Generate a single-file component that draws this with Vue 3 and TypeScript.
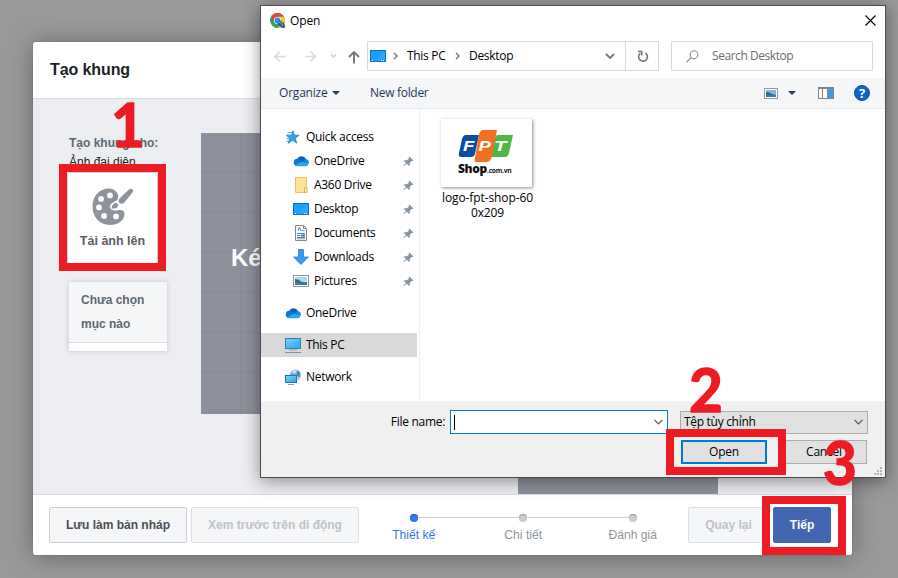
<script setup lang="ts">
type IconName = 'star' | 'cloud' | 'folder' | 'desktop' | 'doc' | 'down' | 'picture' | 'pc' | 'network'
interface NavItem { label: string; icon: IconName; pinned?: boolean; nested?: boolean; selected?: boolean }

const groups: NavItem[][] = [
  [
    { label: 'Quick access', icon: 'star' },
    { label: 'OneDrive', icon: 'cloud', nested: true, pinned: true },
    { label: 'A360 Drive', icon: 'folder', nested: true, pinned: true },
    { label: 'Desktop', icon: 'desktop', nested: true, pinned: true },
    { label: 'Documents', icon: 'doc', nested: true, pinned: true },
    { label: 'Downloads', icon: 'down', nested: true, pinned: true },
    { label: 'Pictures', icon: 'picture', nested: true, pinned: true },
  ],
  [{ label: 'OneDrive', icon: 'cloud' }],
  [{ label: 'This PC', icon: 'pc', selected: true }],
  [{ label: 'Network', icon: 'network' }],
]

const steps: { label: string; active?: boolean }[] = [
  { label: 'Thiết kế', active: true },
  { label: 'Chi tiết' },
  { label: 'Đánh giá' },
]
</script>

<template>
  <div class="screen">
    <section class="modal">
      <header class="modal-head">Tạo khung</header>
      <div class="modal-body">
        <aside class="side">
          <div class="side-title">Tạo khung cho:</div>
          <div class="side-value">Ảnh đại diện</div>
          <div class="upload">
            <svg width="42" height="38" viewBox="0 0 42 38">
              <path fill="#8d949e" fill-rule="evenodd" d="M17 .5C7 .5.5 8.500.5 18.500S7 37 18 37C27 37 32.500 31.500 32.500 26C32.500 22.500 30 21.500 27 22C22.500 23 18.500 23 18 18.500C18 15 23 14 25.500 11.500C28 6.500 23.500.5 17 .5ZM18 4.500a2.900 2.900 0 1 1 0 5.800a2.900 2.900 0 0 1 0-5.800ZM9 8a2.900 2.900 0 1 1 0 5.800a2.900 2.900 0 0 1 0-5.800ZM7 16.500a2.900 2.900 0 1 1 0 5.800a2.900 2.900 0 0 1 0-5.800ZM12 25a2.900 2.900 0 1 1 0 5.800a2.900 2.900 0 0 1 0-5.800ZM24 25.500a2.900 2.900 0 1 1 0 5.800a2.900 2.900 0 0 1 0-5.800Z" />
              <path fill="#8d949e" d="M27 11L37.500.9Q41 0 41.200 3.500L32 15Q28 17 26.500 13.500ZM19.500 20.500C20 16 23 14 25.500 15.500C27 19 25 21 19.500 20.500Z" />
            </svg>
            <span>Tải ảnh lên</span>
          </div>
          <div class="empty"><div class="empty-text">Chưa chọn<br />mục nào</div></div>
        </aside>
        <div class="canvas"><span>Ké</span></div>
        <div class="preview"></div>
        <div class="scrollbar"><i></i></div>
      </div>
      <footer class="modal-foot">
        <button class="btn draft">Lưu làm bản nháp</button>
        <button class="btn mobile off">Xem trước trên di động</button>
        <ol class="steps">
          <li v-for="s in steps" :key="s.label" :class="{ active: s.active }"><i></i><span>{{ s.label }}</span></li>
        </ol>
        <button class="btn back off">Quay lại</button>
        <button class="btn next">Tiếp</button>
      </footer>
    </section>

    <section class="dialog">
      <header class="title">
        <svg class="chrome" width="16" height="16" viewBox="0 0 16 16">
          <circle cx="7.500" cy="7.500" r="7.500" fill="#2fa45a" />
          <path d="M1 3.700A7.500 7.500 0 0 1 14 3.800H7.500L4 8.500Z" fill="#dd4b3e" />
          <path d="M14 3.800A7.500 7.500 0 0 1 8 15L11 8.500L8 3.800Z" fill="#fcc934" />
          <circle cx="7.500" cy="7.500" r="3.600" fill="#fff" />
          <circle cx="7.500" cy="7.500" r="2.900" fill="#4285f4" />
          <path d="M7 9l4-1.500 3 2.500 1.500 4.500-3.500.5-3-2.500Z" fill="#385a68" />
          <path d="M8 9l3 1 2 3M11 8l2 2" stroke="#69b8dc" fill="none" />
        </svg>
        <span class="title-text">Open</span>
        <svg class="close" width="11" height="11" viewBox="0 0 11 11"><path d="M.5.5l10 10M10.500.5l-10 10" stroke="#000" stroke-width="1.150" /></svg>
      </header>

      <div class="address-row">
        <svg class="nav-arrows" width="94" height="30" viewBox="0 0 94 30" fill="none">
          <path d="M9 10.500l-5 5 5 5M4 15.500h11" stroke="#dadada" stroke-width="1.600" />
          <path d="M39.500 10.500l5 5-5 5M44.500 15.500H34" stroke="#dadada" stroke-width="1.600" />
          <path d="M60 13.500l2.500 2.500 2.500-2.500" stroke="#d0d0d0" stroke-width="1.300" />
          <path d="M78 16l5-5 5 5M83 11v11.500" stroke="#777" stroke-width="1.900" />
        </svg>
        <div class="path">
          <svg width="16" height="12" viewBox="0 0 16 12"><use href="#i-desktop" y="-2" /></svg>
          <svg class="sep" width="5" height="8" viewBox="0 0 5 8"><path d="M1 1l3 3-3 3" fill="none" stroke="#777" stroke-width="1.400" /></svg>
          <span class="crumb1">This PC</span>
          <svg class="sep sep2" width="5" height="8" viewBox="0 0 5 8"><path d="M1 1l3 3-3 3" fill="none" stroke="#777" stroke-width="1.400" /></svg>
          <span class="crumb2">Desktop</span>
          <svg class="drop" width="10" height="7" viewBox="0 0 10 7"><path d="M1 1l4 4 4-4" fill="none" stroke="#777" stroke-width="1.900" /></svg>
          <div class="refresh">
            <svg width="12" height="13" viewBox="0 0 12 13" fill="none" stroke="#777" stroke-width="1.600"><path d="M8.300 3A4.400 4.400 0 1 1 3.200 3.400M1 1.500h3.700v4" /></svg>
          </div>
        </div>
        <div class="search">
          <svg width="13" height="13" viewBox="0 0 13 13" fill="none" stroke="#8a8a94" stroke-width="1.100"><circle cx="8" cy="4.700" r="3.900" /><path d="M5.200 7.500L.6 12.200" /></svg>
          <span>Search Desktop</span>
        </div>
      </div>

      <div class="toolbar">
        <span class="organize">Organize</span><i class="tri"></i>
        <span class="newf">New folder</span>
        <svg class="view" width="14" height="11" viewBox="0 0 14 11"><rect x=".5" y=".5" width="13" height="10" fill="#fff" stroke="#999" /><path d="M2 2h10v4H2Z" fill="#77b7e8" /><path d="M2 4q4 0 6 2l4 .5V9H2Z" fill="#3d6a6c" /><path d="M2 7h10v2H2Z" fill="#2f80b9" /></svg>
        <i class="tri tri2"></i>
        <svg class="pane" width="16" height="12" viewBox="0 0 16 12"><rect x=".5" y=".5" width="15" height="11" fill="#fff" stroke="#858585" /><path d="M0 0h16v2H0ZM4 2h1v10H4ZM9 2h1v10H9Z" fill="#858585" /><path d="M10 2h5v9h-5Z" fill="#4399e0" /></svg>
        <span class="help">?</span>
      </div>

      <div class="content">
        <nav>
          <div v-for="(g, gi) in groups" :key="gi" class="group">
            <div v-for="item in g" :key="item.label" class="item" :class="{ nested: item.nested, selected: item.selected }">
              <svg class="ico" width="16" height="16" viewBox="0 0 16 16"><use :href="'#i-' + item.icon" /></svg>
              <span>{{ item.label }}</span>
              <svg v-if="item.pinned" class="pin" width="11" height="11" viewBox="0 0 11 11"><path d="M6.500.5l4 4-1 .7-.8-.3-2 2 .2 2-1 1L3.700 7.700.8 10.300H.3V9.800L3 7 1 5l1-1 2 .2 2-2-.3-1Z" fill="#8796a3" /></svg>
            </div>
          </div>
        </nav>
        <div class="files">
          <figure class="file">
            <div class="thumb">
              <svg width="91" height="68" viewBox="0 0 91 68">
                <path d="M25 16h13l-4 19q-1 3-4 3H20q-3 0-2-4l3-14q1-4 4-4Z" fill="#0c4da2" />
                <path d="M57 16h15l-4 18q-1 4-4 4H50q-2 0-1-3l4-15q1-4 4-4Z" fill="#4fb748" />
                <path d="M42 11h14l-5 26q-1 6-6 6H35q-2 0-1-4l4-23q1-5 4-5Z" fill="#f37021" />
                <g font-family="Liberation Sans, sans-serif" font-weight="700" font-style="italic" font-size="14" fill="#fff">
                  <text x="22" y="32" textLength="11" lengthAdjust="spacingAndGlyphs">F</text><text x="37.500" y="32" textLength="12" lengthAdjust="spacingAndGlyphs">P</text><text x="53" y="32" textLength="12" lengthAdjust="spacingAndGlyphs">T</text>
                </g>
                <text x="17" y="53.500" font-family="Open Sans, sans-serif" font-weight="800" font-size="11.500" fill="#111" textLength="29" lengthAdjust="spacingAndGlyphs">Shop</text>
                <text x="46" y="53.500" font-family="Open Sans, sans-serif" font-weight="700" font-size="7" fill="#222" textLength="24.500" lengthAdjust="spacingAndGlyphs">.com.vn</text>
              </svg>
            </div>
            <figcaption>logo-fpt-shop-60<br />0x209</figcaption>
          </figure>
        </div>
      </div>

      <footer class="actions">
        <div class="line">
          <label>File name:</label>
          <div class="input"><i class="caret"></i><svg width="9" height="6" viewBox="0 0 9 6"><path d="M.5.8l4 4 4-4" fill="none" stroke="#555" stroke-width="1.200" /></svg></div>
          <div class="select"><span>Tệp tùy chỉnh</span><svg width="9" height="6" viewBox="0 0 9 6"><path d="M.5.8l4 4 4-4" fill="none" stroke="#555" stroke-width="1.200" /></svg></div>
        </div>
        <div class="line second">
          <button class="win primary">Open</button>
          <button class="win">Cancel</button>
        </div>
        <svg class="grip" width="8" height="8" viewBox="0 0 8 8" fill="#b4b4b4"><path d="M6 0h2v2H6ZM3 3h2v2H3ZM6 3h2v2H6ZM0 6h2v2H0ZM3 6h2v2H3ZM6 6h2v2H6Z" /></svg>
      </footer>
    </section>

    <div class="box b1"></div>
    <div class="box b2"></div>
    <div class="box b3"></div>
    <span class="num n1">1</span>
    <span class="num n2">2</span>
    <span class="num n3">3</span>

    <svg width="0" height="0" class="defs">
      <defs>
        <linearGradient id="g-blue" x1="0" y1="0" x2="1" y2="1"><stop offset="0" stop-color="#7fd0ff" /><stop offset="1" stop-color="#2ba3f3" /></linearGradient>
        <g id="i-desktop"><rect x=".5" y="2.500" width="15" height="11" fill="#1aa0fb" stroke="#0a72c6" /><path d="M15 3v8L5 13Z" fill="#3cb0ff" opacity=".5" /><path d="M2 12h1v1H2ZM11 12h1v1h-1ZM13 12h1v1h-1Z" fill="#fff" /></g>
        <g id="i-star"><path d="M9.500 1l1.400 4.400h4.800l-3.900 3 1.400 4.900-4.200-2.900-4.200 3.100 1.600-5L3 5.600h4.800Z" transform="translate(-1.500 .8)" fill="#2ea3ee" stroke="#1879bd" stroke-width=".7" /><path d="M2.500 3.500h5M1.500 6h4M1.500 9.500h4M1.500 12h3" stroke="#42a8e6" stroke-width=".9" /></g>
        <g id="i-cloud"><path d="M4 6.200A5 5 0 0 1 13 6L15 9 8 11Z" fill="#0b5fb5" /><path d="M4 5.800A3.700 3.700 0 0 0 3.300 13L11 9Q7 5 4 5.800Z" fill="#1074cd" /><path d="M12.800 6A3.500 3.500 0 0 1 15.600 10.800L10 8.800Q11 6 12.800 6Z" fill="#1487da" /><path d="M2 12.500Q5 9.500 10 8.700L15.700 10.800Q15 13.200 13 13.200H4Q3 13.200 2 12.500Z" fill="#27a5ec" /></g>
        <g id="i-folder"><path d="M2.500.5h11v15h-11Z" fill="#ffe394" stroke="#e8c262" /><path d="M11.500 10.500h2.500v5h-2.500Z" fill="#ffe9a8" stroke="#dab354" /></g>
        <g id="i-doc"><path d="M2.500.5h8l3 3v12h-11Z" fill="#fff" stroke="#868686" /><path d="M10.500.5v3h3" fill="none" stroke="#868686" /><path d="M5 6l1.300-4L8 6M4 8.500h8M4 10.500h3M4 12.500h8" stroke="#3d8cc5" fill="none" /><path d="M8 9.500h4v2H8Z" fill="#2b749f" /><path d="M8.500 5.500H12M4 13.800h8" stroke="#999" /></g>
        <path id="i-down" d="M5.500.5h5V8h5L8 15.500.5 8h5Z" fill="#3b9ae8" stroke="#2c7dc4" stroke-width=".8" />
        <g id="i-picture"><rect x=".5" y="2.500" width="15" height="11" fill="#fff" stroke="#929292" /><path d="M2 4h12v4H2Z" fill="#a8d5f3" /><path d="M2 6q4 0 6 2.500l6 .5v3H2Z" fill="#426a67" /><path d="M2 9.500h12V12H2Z" fill="#2d80b4" /></g>
        <g id="i-pc"><rect x=".5" y="1.500" width="15" height="10" fill="url(#g-blue)" stroke="#2d7eae" /><path d="M4 13h8" stroke="#8da4b3" /><path d="M0 15.500h16" stroke="#7894aa" /></g>
        <g id="i-network"><circle cx="10.500" cy="6" r="5.500" fill="#6daccd" /><path d="M6 3q3-3 6-2l-2 4ZM12 5l4-1-1 5-3 2Z" fill="#bddcea" /><path d="M13 2q3 3 1 7l-2-3Z" fill="#37809f" /><rect x=".5" y="6.500" width="11" height="7" fill="url(#g-blue)" stroke="#2674a5" /><path d="M3 15.500h6" stroke="#829dae" /></g>
      </defs>
    </svg>
  </div>
</template>

<style>
body { overflow: hidden; }
</style>
<style scoped>
* { box-sizing: border-box; }
.screen { position: relative; width: 898px; height: 578px; padding: 42px 0 0 33px; overflow: hidden; background: #999; font: 12px/16px "Liberation Sans", sans-serif; }
button { font: inherit; letter-spacing: inherit; padding: 0; margin: 0; }
svg { display: block; flex: none; }
.defs { position: absolute; }

.modal { width: 819px; height: 513px; display: flex; flex-direction: column; background: #fff; border-radius: 2px; box-shadow: 0 2px 26px rgba(0, 0, 0, .32), 0 0 1px rgba(0, 0, 0, .5); }
.modal-head { height: 57px; padding-left: 17px; line-height: 55px; font-size: 16px; letter-spacing: -.1px; font-weight: 700; color: #1d2129; border-bottom: 1px solid #dadde1; }
.modal-body { height: 395px; display: flex; background: #ebedf1; }
.side { width: 168px; padding: 35px 0 0 36px; }
.side-title { font-size: 12px; line-height: 18px; font-weight: 700; color: #606770; white-space: nowrap; }
.side-value { line-height: 21px; height: 20px; color: #1d2129; white-space: nowrap; }
.upload { width: 91px; height: 92px; margin: 0 0 0 -2px; padding-top: 15px; display: flex; flex-direction: column; align-items: center; background: #fff; border: 1px solid #ccd0d5; border-radius: 3px; font-size: 12.500px; font-weight: 700; color: #5a5e66; gap: 7px; white-space: nowrap; }
.empty { width: 98px; height: 69px; margin-top: 18px; background: #fff; box-shadow: 0 0 5px rgba(0, 0, 0, .16); }
.empty-text { height: 61px; padding: 6px 0 0 12px; background: #f5f6f7; border-bottom: 1px solid #dadde1; line-height: 24px; font-weight: 700; color: #606770; }
.canvas { width: 280px; height: 281px; margin-top: 34px; padding: 111px 0 0 30px; font-size: 24px; line-height: 28px; font-weight: 700; color: #fff; background: repeating-linear-gradient(90deg, #0000 0 7px, #747d8c1c 7px 8px), repeating-linear-gradient(#0000 0 7px, #747d8c1c 7px 8px), repeating-linear-gradient(90deg, #0000 0 39px, #747d8c44 39px 40px), repeating-linear-gradient(#0000 0 39px, #747d8c44 39px 40px), #8d919b; }
.preview { width: 200px; height: 100px; margin: 295px 0 0 37px; background: repeating-linear-gradient(90deg, #8d919b 0 7px, #868b96 7px 8px); }
.scrollbar { width: 17px; margin-left: auto; padding: 382px 0 0 5px; background: #f1f1f1; }
.scrollbar i { display: block; border: 4px solid transparent; border-top-color: #505050; width: 0; }
.modal-foot { height: 61px; display: flex; padding: 12px 20px 0 16px; border-top: 1px solid #dadde1; }
.btn { height: 36px; border: 1px solid #ccd0d5; border-radius: 2px; background: #f5f6f7; color: #4b4f56; font-size: 12px; font-weight: 700; white-space: nowrap; }
.off { color: #bec3c9; border-color: #dadde1; }
.draft { width: 138px; }
.mobile { width: 168px; margin-left: 4px; }
.steps { display: flex; list-style: none; margin: 0; padding: 0; width: 329px; }
.steps li { position: relative; width: 109.500px; display: flex; flex-direction: column; align-items: center; padding-top: 7px; color: #90949c; font-size: 12.150px; white-space: nowrap; }
.steps i { width: 8px; height: 8px; border-radius: 50%; background: #ccc; box-shadow: inset 0 1px 1px #999; z-index: 1; }
.steps span { margin-top: 4px; line-height: 18px; }
.steps .active { color: #3578e5; }
.steps .active i { background: #3578e5; box-shadow: inset 0 1px 1px #2259b0; }
.steps li + li::before { content: ""; position: absolute; top: 10px; right: 59px; width: 101px; height: 1px; background: #ccc; }
.back { width: 81px; }
.next { width: 58px; margin-left: 4px; background: #4267b2; border-color: #4267b2; color: #fff; }

.dialog { position: absolute; left: 260px; top: 5px; width: 626px; height: 473px; display: flex; flex-direction: column; background: #fff; border: 1px solid #4b4b50; box-shadow: 0 3px 16px rgba(0, 0, 0, .42); font-family: "Open Sans", "Noto Sans", sans-serif; font-size: 12px; letter-spacing: -.3px; color: #000; white-space: nowrap; }
.title { height: 30px; display: flex; align-items: center; padding: 0 9px 0 9px; }
.title-text { margin-left: 4px; letter-spacing: -.1px; }
.close { margin: -2px 0 0 auto; }
.address-row { display: flex; height: 42px; padding: 5px 0 0 12px; }
.nav-arrows { margin-left: -2px; }
.path { width: 292px; height: 30px; margin-left: 2px; border: 1px solid #d9d9d9; display: flex; align-items: center; padding-left: 2px; }
.sep { margin-left: 7px; }
.crumb1 { width: 39px; margin-left: 9px; }
.sep2 { margin-left: 9px; }
.crumb2 { margin-left: 9px; }
.drop { margin-left: auto; }
.refresh { width: 33px; height: 28px; margin-left: 10px; border-left: 1px solid #d9d9d9; display: flex; align-items: center; justify-content: center; padding-left: 1px; }
.search { width: 202px; height: 30px; margin-left: 12px; border: 1px solid #d9d9d9; display: flex; align-items: center; padding-left: 14px; gap: 13px; color: #6d6d6d; letter-spacing: -.45px; }
.toolbar { height: 31px; display: flex; align-items: center; background: #f5f6f7; border-bottom: 1px solid #e8e8e8; padding-left: 18px; color: #1e395b; }
.organize { width: 48px; letter-spacing: -.2px; }
.tri { border: 4px solid transparent; border-top-color: #1e395b; border-bottom: 0; margin-left: 5px; }
.newf { width: 59px; margin-left: 30px; }
.view { margin-left: 335px; }
.tri2 { margin-left: 10px; }
.pane { margin-left: 22px; }
.help { width: 16px; height: 16px; margin-left: 20px; border-radius: 50%; background: #0868c4; border: 1px solid #16528b; color: #fff; text-align: center; line-height: 14px; font-weight: 700; font-size: 13px; letter-spacing: 0; }
.content { height: 292px; display: flex; }
nav { width: 159px; padding-top: 16px; border-right: 1px solid #f0f0f0; }
.group { margin-bottom: 8px; }
.item { width: 156px; height: 24px; display: flex; align-items: center; padding: 0 3px 0 24px; }
.item span { margin-left: 5px; }
.nested { padding-left: 32px; }
.selected { background: #d9d9d9; }
.pin { margin-left: auto; }
.files { padding: 10px 0 0 21px; }
.file { width: 93px; margin: 0; display: flex; flex-direction: column; align-items: center; }
.thumb { width: 91px; height: 68px; background: #fff; box-shadow: 1px 1px 3px rgba(0, 0, 0, .45); margin-left: -2px; }
figcaption { margin-top: 3px; line-height: 15px; text-align: center; letter-spacing: -.1px; }
.actions { position: relative; height: 76px; background: #f0f0f0; padding-top: 9px; }
.line { display: flex; align-items: center; height: 24px; }
.line label { width: 184px; text-align: right; }
.input { width: 218px; height: 24px; margin-left: 5px; display: flex; align-items: center; justify-content: space-between; background: #fff; border: 1px solid #0078d7; padding: 0 4px 0 3px; }
.caret { width: 1px; height: 15px; background: #000; }
.select { width: 188px; height: 23px; margin-left: 12px; display: flex; align-items: center; justify-content: space-between; background: #e1e1e1; border: 1px solid #adadad; padding: 0 4px 0 3px; }
.second { margin-top: 6px; padding-left: 420px; gap: 14px; }
.win { width: 86px; height: 24px; background: #e1e1e1; border: 1px solid #adadad; letter-spacing: -.2px; }
.primary { border: 2px solid #0078d7; }
.grip { position: absolute; right: 3px; bottom: 2px; }

.box { position: absolute; border: 8px solid #ed1c24; }
.b1 { left: 59px; top: 164px; width: 107px; height: 107px; }
.b2 { left: 666px; top: 429px; width: 120px; height: 46px; }
.b3 { left: 762px; top: 496px; width: 84px; height: 59px; }
.num { position: absolute; font: 700 62px/64px Lato, sans-serif; color: #ed1c24; -webkit-text-stroke: 1.600px #ed1c24; transform: scaleX(.94); }
.n1 { left: 110px; top: 91px; }
.n2 { left: 687.500px; top: 356px; }
.n3 { left: 822px; top: 429px; }
</style>
